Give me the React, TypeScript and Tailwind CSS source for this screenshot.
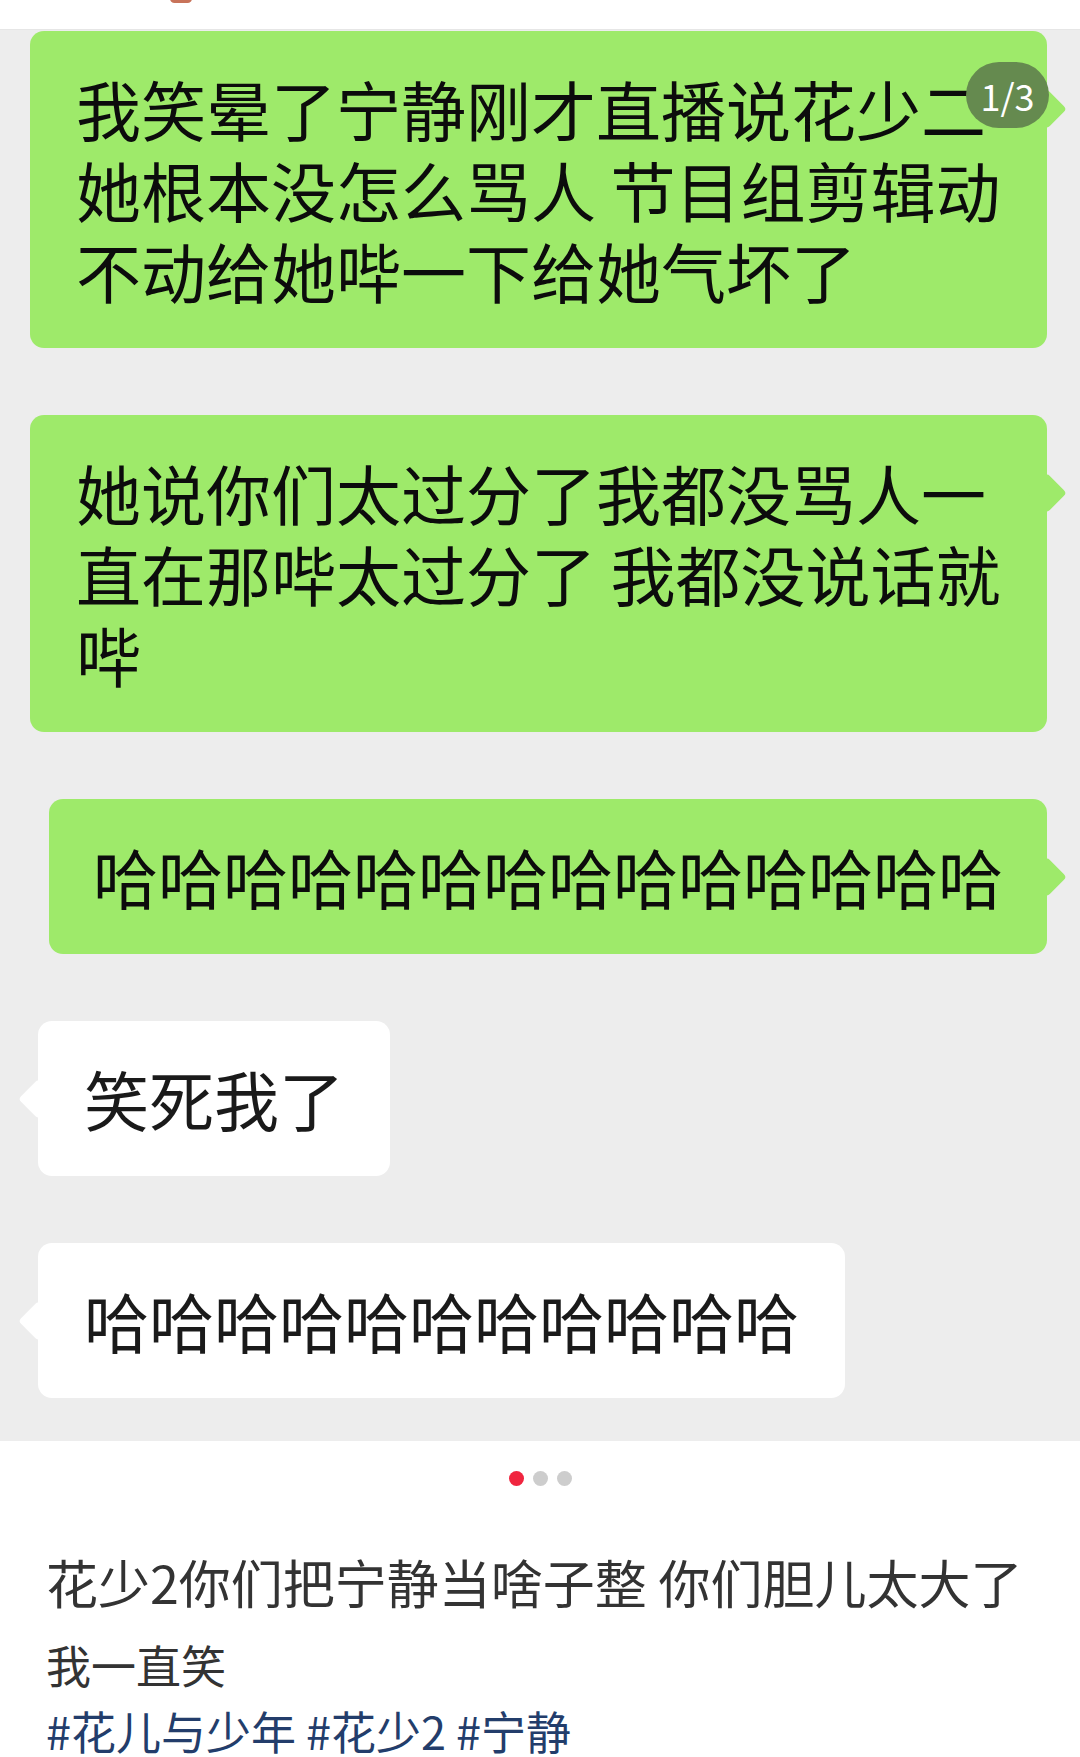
import React from "react";

const GreenBubble = ({ lines, full }: { lines: string[]; full?: boolean }) => (
  <div
    className={
      "relative bg-[#9eea6a] rounded-[14px] py-[37px] text-[65px] leading-[81px] text-[#0c0c0c] " +
      (full ? "self-stretch pl-[46px] pr-[16px]" : "self-end px-[44px]")
    }
  >
    <div className="absolute top-[64px] right-[-14px] w-[28px] h-[28px] rotate-45 rounded-[4px] bg-[#9eea6a]" />
    <div className="relative">
      {lines.map((l, i) => (
        <div key={i} className="whitespace-pre">
          {l}
        </div>
      ))}
    </div>
  </div>
);

const WhiteBubble = ({ text }: { text: string }) => (
  <div className="relative self-start ml-[8px] bg-white rounded-[14px] px-[46px] py-[37px] text-[65px] leading-[81px] text-[#1a1a1a]">
    <div className="absolute top-[64px] left-[-14px] w-[28px] h-[28px] rotate-45 rounded-[4px] bg-white" />
    <div className="relative whitespace-pre">{text}</div>
  </div>
);

export default function App() {
  return (
    <div className="relative w-[1080px] h-[1757px] overflow-hidden bg-white font-['Noto_Sans_CJK_SC','Noto_Sans',sans-serif]">
      <div className="relative h-[30px] bg-white border-b border-[#e6e6e6]">
        <div className="absolute left-[170px] top-[-6px] w-[22px] h-[9px] rounded-full bg-[#c8735a]" />
      </div>
      <div className="bg-[#ededed] pt-[1px] pb-[43px] pl-[30px] pr-[33px] flex flex-col gap-[67px]">
        <GreenBubble
          full
          lines={["我笑晕了宁静刚才直播说花少二", "她根本没怎么骂人 节目组剪辑动", "不动给她哔一下给她气坏了"]}
        />
        <GreenBubble
          full
          lines={["她说你们太过分了我都没骂人一", "直在那哔太过分了 我都没说话就", "哔"]}
        />
        <GreenBubble lines={["哈哈哈哈哈哈哈哈哈哈哈哈哈哈"]} />
        <WhiteBubble text="笑死我了" />
        <WhiteBubble text="哈哈哈哈哈哈哈哈哈哈哈" />
      </div>
      <div className="bg-white">
        <div className="pt-[30px] flex justify-center gap-[9px]">
          <div className="w-[15px] h-[15px] rounded-full bg-[#f0253f]" />
          <div className="w-[15px] h-[15px] rounded-full bg-[#cdcdcd]" />
          <div className="w-[15px] h-[15px] rounded-full bg-[#cdcdcd]" />
        </div>
        <div className="mt-[58px] px-[46px] text-[52px] leading-[76px] text-[#333] whitespace-nowrap">
          花少2你们把宁静当啥子整 你们胆儿太大了
        </div>
        <div className="mt-[12px] px-[46px] text-[45px] leading-[66px] text-[#333]">我一直笑</div>
        <div className="px-[46px] text-[45px] leading-[66px] text-[#233d6b] whitespace-nowrap">
          #花儿与少年 #花少2 #宁静
        </div>
      </div>
      <div className="absolute top-[62px] left-[966px] w-[83px] h-[66px] rounded-full bg-[#658a4f] flex items-center justify-center text-white text-[36px] leading-none">
        1/3
      </div>
    </div>
  );
}
